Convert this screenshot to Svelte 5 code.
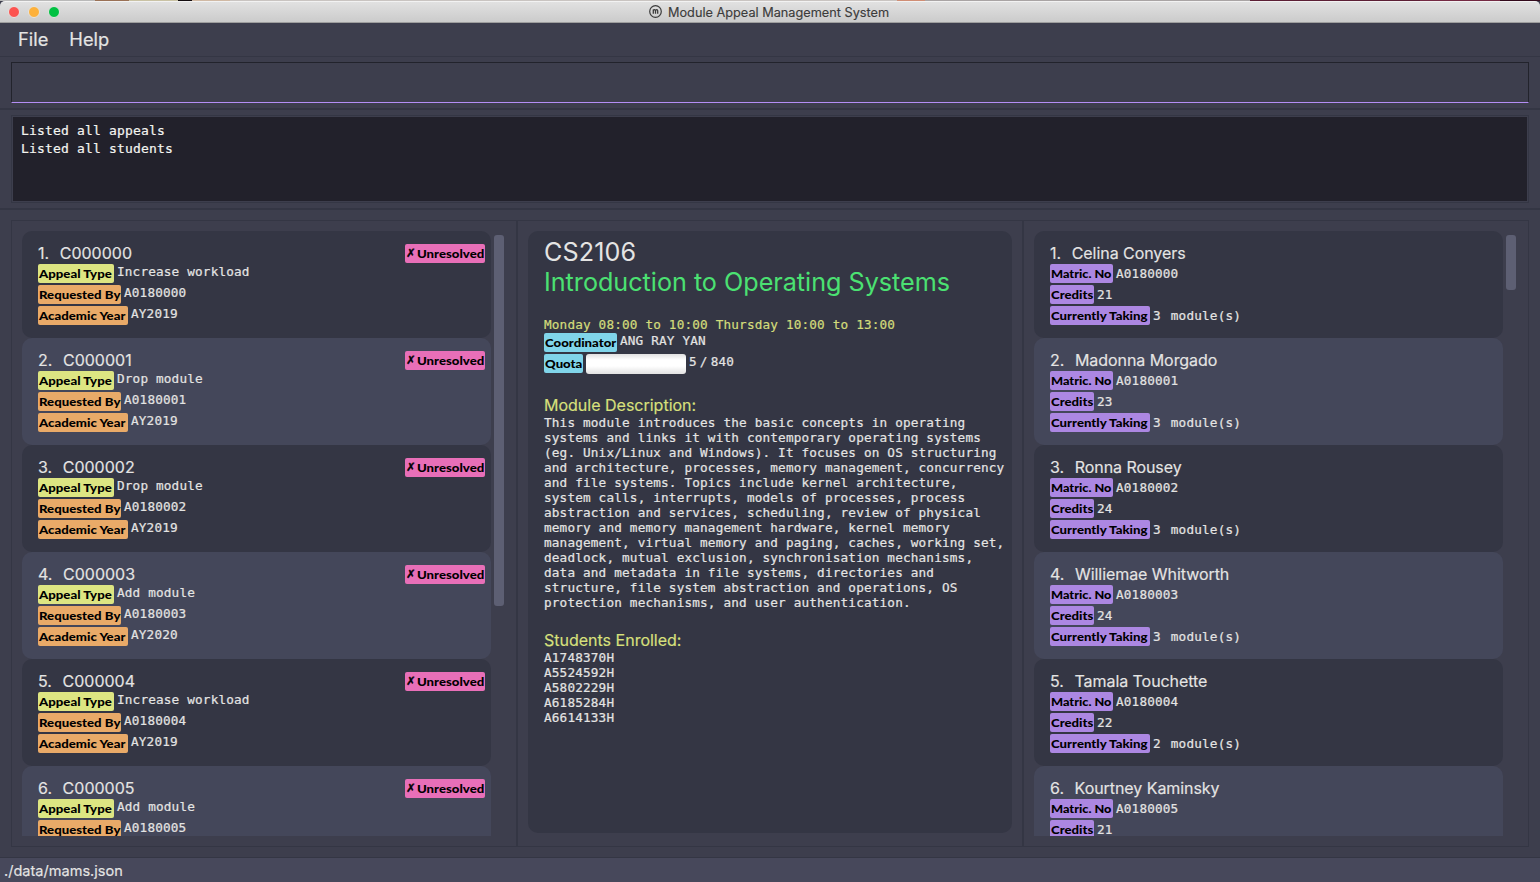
<script>
  const kinds = ['Increase workload', 'Drop module', 'Drop module', 'Add module', 'Increase workload', 'Add module'];
  const years = ['AY2019', 'AY2019', 'AY2019', 'AY2020', 'AY2019', 'AY2019'];
  const appeals = kinds.map((kind, i) => ({ n: i + 1, id: `C00000${i}`, kind, by: `A018000${i}`, year: years[i] }));
  const students = [
    ['Celina Conyers', 21, 3],
    ['Madonna Morgado', 23, 3],
    ['Ronna Rousey', 24, 3],
    ['Williemae Whitworth', 24, 3],
    ['Tamala Touchette', 22, 2],
    ['Kourtney Kaminsky', 21, 3]
  ].map(([name, credits, taking], i) => ({ n: i + 1, name, credits, taking, matric: `A018000${i}` }));
  const description = [
    'This module introduces the basic concepts in operating',
    'systems and links it with contemporary operating systems',
    '(eg. Unix/Linux and Windows). It focuses on OS structuring',
    'and architecture, processes, memory management, concurrency',
    'and file systems. Topics include kernel architecture,',
    'system calls, interrupts, models of processes, process',
    'abstraction and services, scheduling, review of physical',
    'memory and memory management hardware, kernel memory',
    'management, virtual memory and paging, caches, working set,',
    'deadlock, mutual exclusion, synchronisation mechanisms,',
    'data and metadata in file systems, directories and',
    'structure, file system abstraction and operations, OS',
    'protection mechanisms, and user authentication.'
  ];
  const enrolled = ['A1748370H', 'A5524592H', 'A5802229H', 'A6185284H', 'A6614133H'];
</script>

{#snippet tag(text, kind)}
  <b class="tag {kind}"><span class="wide">{text}</span></b>
{/snippet}

<div class="window">
  <div class="desktop"></div>
  <header class="titlebar">
    <div class="lights"><i class="red"></i><i class="amber"></i><i class="green"></i></div>
    <div class="caption">
      <svg width="13" height="13" viewBox="0 0 13 13" fill="none" stroke="#3c3c3c">
        <circle cx="6.5" cy="6.5" r="5.8" stroke-width="1.2" />
        <path d="M4.3 8.7V4.6M4.3 5.6Q4.6 4.7 5.4 4.7Q6.5 4.7 6.5 5.8V8.7M6.5 5.8Q6.7 4.7 7.6 4.7Q8.7 4.7 8.7 5.8V8.7" stroke-width="1.3" />
      </svg>
      <span>Module Appeal Management System</span>
    </div>
  </header>
  <nav><span>File</span><span>Help</span></nav>
  <section class="command"><div class="field"></div></section>
  <section class="result"><div class="frame"><pre>Listed all appeals
Listed all students</pre></div></section>
  <main>
    <div class="columns">
      <section class="col left">
        <div class="list">
          {#each appeals as a}
            <article>
              <div class="head"><span>{a.n}.</span><span>{a.id}</span><b class="tag pink"><i>✗</i><span class="wide">Unresolved</span></b></div>
              <div class="row up">{@render tag('Appeal Type', 'lime')}<span class="value">{a.kind}</span></div>
              <div class="row up">{@render tag('Requested By', 'orange rq')}<span class="value">{a.by}</span></div>
              <div class="row up">{@render tag('Academic Year', 'orange ay')}<span class="value">{a.year}</span></div>
            </article>
          {/each}
        </div>
        <div class="bar long"></div>
      </section>
      <section class="col mid">
        <div class="detail">
          <h1>CS2106</h1>
          <h2>Introduction to Operating Systems</h2>
          <p class="slots">Monday 08:00 to 10:00 Thursday 10:00 to 13:00</p>
          <div class="row up">{@render tag('Coordinator', 'cyan co')}<span class="value">ANG RAY YAN</span></div>
          <div class="row up">{@render tag('Quota', 'cyan qu')}<div class="progress"></div><span class="value">5<em>/</em>840</span></div>
          <h3>Module Description:</h3>
          <pre>{description.join('\n')}</pre>
          <h3>Students Enrolled:</h3>
          <pre>{enrolled.join('\n')}</pre>
        </div>
      </section>
      <section class="col right">
        <div class="list">
          {#each students as s}
            <article>
              <div class="head"><span>{s.n}.</span><span class="name">{s.name}</span></div>
              <div class="row">{@render tag('Matric. No', 'violet ma')}<span>{s.matric}</span></div>
              <div class="row">{@render tag('Credits', 'violet cr')}<span>{s.credits}</span></div>
              <div class="row">{@render tag('Currently Taking', 'violet ct')}<span>{s.taking}</span><span class="mods">module(s)</span></div>
            </article>
          {/each}
        </div>
        <div class="bar short"></div>
      </section>
    </div>
  </main>
  <footer>./data/mams.json</footer>
</div>

<style>
  :global(body) { margin: 0; background: #3d3e4d; }
  * { box-sizing: border-box; }
  .window { width: 1540px; height: 882px; display: flex; flex-direction: column; overflow: hidden; background: #3d3e4d; color: #e4e4e3; font-family: Inter, sans-serif; }
  .desktop { height: 1px; flex: none; background: linear-gradient(90deg, #b9b9b9 95px, #9a7156 95px 129px, #c9c2a4 129px 178px, #140d10 178px 192px, #d0b9a4 192px 230px, #c9c4c1 230px 897px, #d08e75 897px 925px, #a9a4a4 925px 1250px, #5c1f35 1250px 1420px, #742a43 1420px 1500px, #330a1c 1500px); }
  .titlebar { height: 22px; flex: none; display: flex; align-items: center; position: relative; border-top: 1px solid #f2f2f2; border-bottom: 1px solid #9e9e9e; border-radius: 5px 5px 0 0; background: linear-gradient(#e1e1e1, #cbcbcb); }
  .lights { display: flex; gap: 8px; padding-left: 8px; }
  .lights i { width: 12px; height: 12px; border-radius: 50%; border: 1px solid; }
  .red { background: #fc5350; border-color: #e2443f; }
  .amber { background: #fdb13b; border-color: #e09b30; }
  .green { background: #00c142; border-color: #08a837; }
  .caption { position: absolute; left: 649px; top: 1px; display: flex; align-items: center; gap: 6px; height: 18px; color: #3c3c3c; font-size: 12.72px; -webkit-text-stroke: 0.15px; }
  .caption svg { margin-top: -1px; }
  nav { height: 34px; flex: none; display: flex; padding-left: 18px; gap: 21px; font-size: 18.3px; line-height: 32px; border-bottom: 1px solid #343644; -webkit-text-stroke: 0.2px; }
  .command { height: 53px; flex: none; padding: 5px 11px; border-bottom: 2px solid #343644; }
  .field { height: 41px; border: 1px solid #22232c; border-bottom-color: #b48ef5; }
  .result { height: 100px; flex: none; padding: 5px 11px; border-bottom: 2px solid #343644; }
  .frame { height: 88px; border: 1px solid #343644; padding: 1px; }
  .frame pre { height: 84px; padding: 5px 8px; background: #22212b; font-size: 13px; line-height: 18px; letter-spacing: 0.17px; color: #f4f4f0; }
  pre { margin: 0; font-family: "DejaVu Sans Mono", monospace; -webkit-text-stroke: 0.2px; }
  main { height: 647px; flex: none; padding: 10px 11px; }
  .columns { height: 627px; display: grid; grid-template-columns: 504px 506px 506px; border: 1px solid #343644; }
  .col { display: flex; padding: 10px; align-items: flex-start; }
  .mid, .right { border-left: 2px solid #343644; }
  .list { width: 469px; height: 605px; overflow: hidden; flex: none; }
  article { height: 107px; padding: 12px 6px 0 16px; border-radius: 10px; background: #343644; }
  article:nth-child(even) { background: #44475a; }
  .head { display: flex; height: 21px; gap: 10.6px; font-size: 16px; line-height: 20px; -webkit-text-stroke: 0.15px; }
  .name { letter-spacing: -0.06px; }
  .head .tag { margin: 1px 0 0 auto; }
  .row { display: flex; height: 21px; gap: 3px; font: 12.7px/19px "DejaVu Sans Mono", monospace; letter-spacing: 0.165px; -webkit-text-stroke: 0.2px; }
  .row.up .value { margin-top: -2px; }
  .tag { display: flex; height: 19px; flex: none; padding-left: 1px; border-radius: 2px; font: 900 12px/20px Lato, sans-serif; letter-spacing: 0; -webkit-text-stroke: 0; color: #000; white-space: nowrap; width: 76px; }
  .wide { flex: none; transform: scaleX(1.1); transform-origin: left; }
  .lime { background: #dde582; }
  .orange { background: #e9aa68; }
  .rq { width: 83px; }
  .ay { width: 90px; }
  .pink { gap: 3px; background: #e86fb8; width: 80px; }
  .pink i { width: 8px; font: 11.5px/18px "DejaVu Sans", sans-serif; -webkit-text-stroke: 0.4px; }
  .cyan { background: #80d5ea; }
  .co { width: 73px; }
  .qu { width: 39px; }
  .violet { background: #ac87e2; }
  .ma { width: 63px; }
  .ma .wide { transform: scaleX(1.06); }
  .cr { width: 44px; }
  .ct { width: 100px; }
  .bar { width: 10px; margin: 4px 0 0 3px; border-radius: 3px; background: #5d5f73; }
  .long { height: 371px; }
  .short { height: 55px; }
  .mods { margin-left: 7px; }
  .detail { width: 484px; height: 602px; padding: 6px 0 0 16px; border-radius: 10px; background: #343644; }
  h1, h2, h3, p { margin: 0; font-weight: 400; }
  h1, h2 { font-size: 25.15px; line-height: 30px; }
  h1 { letter-spacing: 0.1px; }
  h2 { color: #4be172; }
  .slots { margin-top: 20px; height: 16px; font: 12.7px/16px "DejaVu Sans Mono", monospace; letter-spacing: 0.165px; color: #d3dc7b; -webkit-text-stroke: 0.2px; }
  h3 { margin-top: 20px; font-size: 16px; line-height: 20px; color: #d8e07c; -webkit-text-stroke: 0.15px; }
  .detail pre { font-size: 12.7px; line-height: 15px; letter-spacing: 0.165px; }
  .progress { width: 100px; height: 20px; border-radius: 3px; background: linear-gradient(#e0e0e0, #fff 30%, #fff 60%, #e2e2e2); }
  .value em { margin: 0 3px; font-style: normal; }
  footer { height: 25px; flex: none; padding-left: 4px; border-top: 1px solid #343644; background: #47485b; font-size: 14.55px; line-height: 26px; -webkit-text-stroke: 0.15px; }
</style>
